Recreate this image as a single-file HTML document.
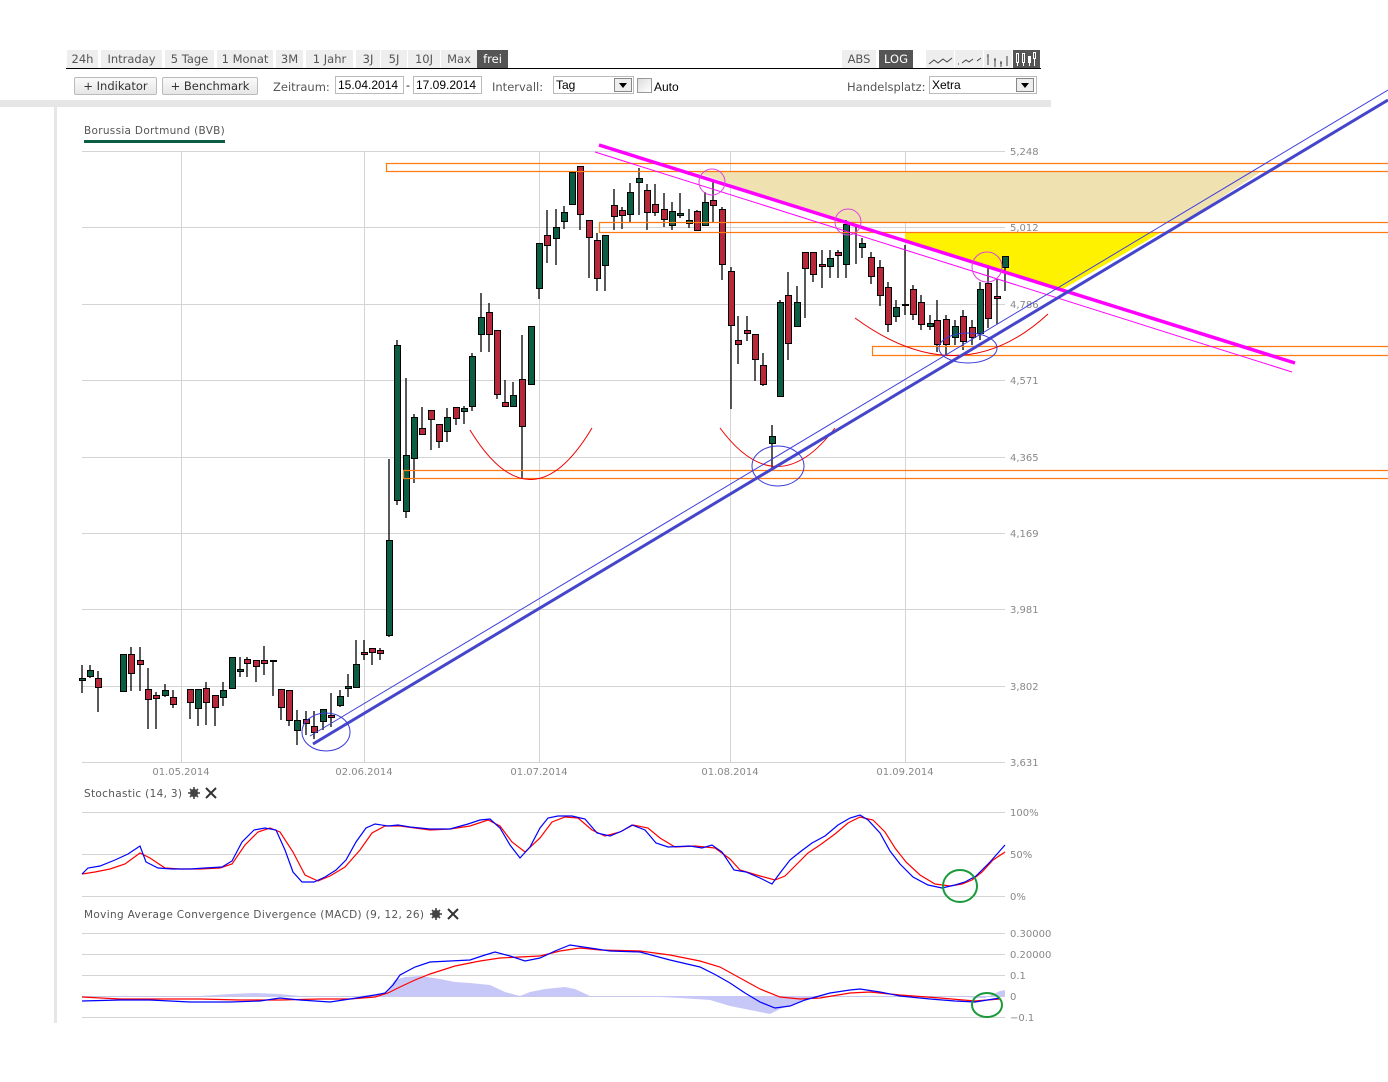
<!DOCTYPE html>
<html><head><meta charset="utf-8">
<style>
*{margin:0;padding:0;box-sizing:border-box}
body{width:1388px;height:1082px;background:#fff;font-family:"DejaVu Sans","Liberation Sans",sans-serif;font-size:11px;color:#444;position:relative;overflow:hidden}
.a{position:absolute;white-space:nowrap}
.tab{position:absolute;top:50px;height:18px;background:#eee;color:#555;font-size:11.5px;line-height:18px;text-align:center}
.btn{position:absolute;top:77px;height:18px;border:1px solid #bbb;border-radius:2px;background:linear-gradient(#fafafa,#e6e6e6);color:#333;font-size:11.5px;line-height:16px;text-align:center}
.inp{position:absolute;top:76px;height:18px;border:1px solid #bbb;background:#fff;font-family:"Liberation Sans",sans-serif;font-size:12px;line-height:16px;padding-left:2px;color:#000}
.arr{position:absolute;width:18px;height:14px;border:1px solid #888;background:#eee}
.arr:after{content:"";position:absolute;left:4px;top:4px;border-left:4px solid transparent;border-right:4px solid transparent;border-top:5px solid #000}
svg{position:absolute;left:0;top:0}
</style></head><body>
<div class="tab" style="left:67px;width:31px">24h</div>
<div class="tab" style="left:101px;width:61px">Intraday</div>
<div class="tab" style="left:165px;width:49px">5 Tage</div>
<div class="tab" style="left:217px;width:56px">1 Monat</div>
<div class="tab" style="left:276px;width:27px">3M</div>
<div class="tab" style="left:306px;width:47px">1 Jahr</div>
<div class="tab" style="left:356px;width:24px">3J</div>
<div class="tab" style="left:381px;width:26px">5J</div>
<div class="tab" style="left:408px;width:32px">10J</div>
<div class="tab" style="left:441px;width:36px">Max</div>
<div class="tab" style="left:477px;width:31px;background:#555;color:#fff">frei</div>
<div class="tab" style="left:842px;width:34px">ABS</div>
<div class="tab" style="left:879px;width:34px;background:#555;color:#fff">LOG</div>
<div class="tab" style="left:926px;width:28px"></div>
<div class="tab" style="left:955px;width:28px"></div>
<div class="tab" style="left:984px;width:28px"></div>
<div class="tab" style="left:1013px;width:27px;background:#555"></div>
<div class="a" style="left:66px;top:68px;width:975px;height:1px;background:#000"></div>

<div class="btn" style="left:74px;width:83px">+ Indikator</div>
<div class="btn" style="left:162px;width:96px">+ Benchmark</div>
<div class="a" style="left:273px;top:80px;font-size:11.5px;color:#555">Zeitraum:</div>
<div class="inp" style="left:335px;width:69px">15.04.2014</div>
<div class="a" style="left:406px;top:79px;color:#000">-</div>
<div class="inp" style="left:413px;width:69px">17.09.2014</div>
<div class="a" style="left:492px;top:80px;font-size:11.5px;color:#555">Intervall:</div>
<div class="inp" style="left:553px;width:81px">Tag</div>
<div class="arr" style="left:614px;top:78px"></div>
<div class="a" style="left:637px;top:78px;width:15px;height:15px;border:1px solid #999;background:linear-gradient(135deg,#ddd,#fff)"></div>
<div class="a" style="left:654px;top:80px;font-family:'Liberation Sans',sans-serif;font-size:12px;color:#000">Auto</div>
<div class="a" style="left:847px;top:80px;font-size:11.5px;color:#555">Handelsplatz:</div>
<div class="inp" style="left:929px;width:108px">Xetra</div>
<div class="arr" style="left:1016px;top:78px"></div>

<div class="a" style="left:0;top:100px;width:1051px;height:7px;background:#e6e6e6"></div>
<div class="a" style="left:54px;top:107px;width:3px;height:916px;background:#e6e6e6"></div>

<div class="a" style="left:84px;top:125px;font-size:10.5px;color:#555;letter-spacing:0.3px">Borussia Dortmund (BVB)</div>
<div class="a" style="left:84px;top:140px;width:141px;height:3px;background:#0b5e43"></div>

<svg width="1388" height="1082" viewBox="0 0 1388 1082">
<g stroke="#d4d4d4" stroke-width="1">
<line x1="82" y1="151.5" x2="1005" y2="151.5"/><line x1="82" y1="227.5" x2="1005" y2="227.5"/><line x1="82" y1="304.5" x2="1005" y2="304.5"/><line x1="82" y1="380.5" x2="1005" y2="380.5"/><line x1="82" y1="457.5" x2="1005" y2="457.5"/><line x1="82" y1="533.5" x2="1005" y2="533.5"/><line x1="82" y1="609.5" x2="1005" y2="609.5"/><line x1="82" y1="686.5" x2="1005" y2="686.5"/><line x1="82" y1="762.5" x2="1005" y2="762.5"/>
<line x1="181.5" y1="151" x2="181.5" y2="762"/><line x1="364.5" y1="151" x2="364.5" y2="762"/><line x1="539.5" y1="151" x2="539.5" y2="762"/><line x1="730.5" y1="151" x2="730.5" y2="762"/><line x1="905.5" y1="151" x2="905.5" y2="762"/>
<line x1="82" y1="812.5" x2="1005" y2="812.5"/><line x1="82" y1="854.5" x2="1005" y2="854.5"/><line x1="82" y1="896.5" x2="1005" y2="896.5"/>
<line x1="82" y1="933.5" x2="1005" y2="933.5"/><line x1="82" y1="954.5" x2="1005" y2="954.5"/><line x1="82" y1="975.5" x2="1005" y2="975.5"/><line x1="82" y1="1017.5" x2="1005" y2="1017.5"/>
</g>
<line x1="82" y1="996.5" x2="1005" y2="996.5" stroke="#c8c8e8"/>
<g font-family="DejaVu Sans,sans-serif" font-size="10" fill="#888">
<text x="1010" y="155">5,248</text><text x="1010" y="231">5,012</text><text x="1010" y="308">4,786</text><text x="1010" y="384">4,571</text><text x="1010" y="461">4,365</text><text x="1010" y="537">4,169</text><text x="1010" y="613">3,981</text><text x="1010" y="690">3,802</text><text x="1010" y="766">3,631</text>
<text x="181" y="775" text-anchor="middle">01.05.2014</text><text x="364" y="775" text-anchor="middle">02.06.2014</text><text x="539" y="775" text-anchor="middle">01.07.2014</text><text x="730" y="775" text-anchor="middle">01.08.2014</text><text x="905" y="775" text-anchor="middle">01.09.2014</text>
<text x="1010" y="816">100%</text><text x="1010" y="858">50%</text><text x="1010" y="900">0%</text>
<text x="1010" y="937">0.30000</text><text x="1010" y="958">0.20000</text><text x="1010" y="979">0.1</text><text x="1010" y="1000">0</text><text x="1010" y="1021">−0.1</text>
</g>
<g font-family="DejaVu Sans,sans-serif" font-size="10.5" fill="#555">
<text x="84" y="797" textLength="98" lengthAdjust="spacing">Stochastic (14, 3)</text>
<text x="84" y="918" textLength="340" lengthAdjust="spacing">Moving Average Convergence Divergence (MACD) (9, 12, 26)</text>
</g>
<g fill="#444"><circle cx="194" cy="793" r="4"/><circle cx="436" cy="914" r="4"/></g>
<g fill="#fff"><circle cx="194" cy="793" r="1.8"/><circle cx="436" cy="914" r="1.8"/></g>
<g stroke="#444" stroke-width="1.6"><path d="M194 787v12M188 793h12M190 789l8 8M198 789l-8 8M436 908v12M430 914h12M432 910l8 8M440 910l-8 8"/></g>
<g stroke="#333" stroke-width="2"><path d="M206 788l10 10M216 788l-10 10M448 909l10 10M458 909l-10 10"/></g>

<g fill="none" stroke="#444" stroke-width="1"><path d="M929 64l5-4 4 3 5-4 4 3 5-4"/><path d="M958 64h1M962 63l4-3 3 2 4-3M977 61l4-3"/><path d="M988 54v11M987 56h1M995 58v9M994 60h2M1001 61v6M1000 63h2M1007 56v10"/></g>
<g fill="none" stroke="#fff" stroke-width="1"><rect x="1016.5" y="53.5" width="2" height="9"/><rect x="1022.5" y="53.5" width="2" height="9"/><rect x="1028.5" y="56.5" width="2" height="6"/><rect x="1033.5" y="52.5" width="2" height="6"/><path d="M1017.5 62v4M1023.5 62v4M1029.5 56v10M1034.5 58v8"/></g>

<polygon points="692,171 1262,171 1184,222 848,222 835,219" fill="#efe1b0"/>
<polygon points="905,233 1160,233 1063,289 905,241" fill="#fff200"/>

<g stroke="#000" stroke-width="1.3">
<path d="M82 665v28M90 665v13M98 671v41M123 654v37M131 647v44M140 647v44M148 668v61M156 692v37M165 684v13M173 690v18M190 689v30M198 689v37M206 682v43M215 695v31M223 682v24M232 657v31M240 657v20M247 657v20M256 660v22M264 646v29M273 660v36M281 689v31M289 690v36M297 710v35M306 711v24M314 711v28M323 709v21M331 693v34M340 690v17M348 674v23M356 640v47M364 640v20M372 648v17M380 648v12M389 459v178M397 340v165M406 378v140M414 414v69M422 407v27M431 410v40M439 424v24M447 408v34M456 407v18M464 406v18M472 353v58M481 293v59M489 303v49M497 330v69M505 380v26M513 382v24M522 335v143M531 326v58M539 243v56M547 210v53M556 209v56M564 206v23M572 172v32M580 166v64M589 220v58M597 233v58M605 235v56M614 189v41M622 207v22M630 183v39M639 168v47M647 184v46M655 184v32M664 193v34M672 202v28M680 193v25M689 209v19M697 210v20M705 192v34M713 180v42M722 207v73M731 267v142M738 316v48M747 316v25M755 334v47M763 353v33M772 425v45M780 300v97M788 272v88M797 286v40M805 252v66M813 252v30M822 250v38M830 250v28M838 250v28M846 220v58M856 225v39M862 238v20M871 252v32M880 260v46M888 282v50M896 300v22M905 245v70M913 285v35M921 295v35M930 315v15M937 300v52M946 315v40M955 320v25M963 310v40M972 320v25M980 282v58M988 265v63M997 279v45M1005 256v35"/>
</g>
<g stroke="#000" stroke-width="1">
<g fill="#0b5e43">
<rect x="79.5" y="678.5" width="6" height="2"/><rect x="87.5" y="670.5" width="6" height="6"/><rect x="120.5" y="654.5" width="6" height="37"/><rect x="162.5" y="690.5" width="6" height="5"/><rect x="195.5" y="689.5" width="6" height="19"/><rect x="220.5" y="690.5" width="6" height="7"/><rect x="229.5" y="657.5" width="6" height="31"/><rect x="237.5" y="669.5" width="6" height="2"/><rect x="270.5" y="660.5" width="6" height="1"/><rect x="294.5" y="720.5" width="6" height="10"/><rect x="320.5" y="709.5" width="6" height="12"/><rect x="337.5" y="696.5" width="6" height="9"/><rect x="345.5" y="686.5" width="6" height="2"/><rect x="353.5" y="664.5" width="6" height="23"/><rect x="386.5" y="540.5" width="6" height="95"/><rect x="394.5" y="345.5" width="6" height="155"/><rect x="403.5" y="455.5" width="6" height="56"/><rect x="411.5" y="417.5" width="6" height="41"/><rect x="444.5" y="417.5" width="6" height="14"/><rect x="461.5" y="408.5" width="6" height="3"/><rect x="469.5" y="356.5" width="6" height="50"/><rect x="478.5" y="317.5" width="6" height="17"/><rect x="510.5" y="395.5" width="6" height="11"/><rect x="528.5" y="326.5" width="6" height="58"/><rect x="536.5" y="243.5" width="6" height="45"/><rect x="553.5" y="227.5" width="6" height="11"/><rect x="561.5" y="212.5" width="6" height="9"/><rect x="569.5" y="172.5" width="6" height="32"/><rect x="602.5" y="235.5" width="6" height="30"/><rect x="627.5" y="192.5" width="6" height="22"/><rect x="636.5" y="178.5" width="6" height="4"/><rect x="669.5" y="211.5" width="6" height="14"/><rect x="677.5" y="213.5" width="6" height="2"/><rect x="686.5" y="220.5" width="6" height="3"/><rect x="702.5" y="202.5" width="6" height="23"/><rect x="769.5" y="436.5" width="6" height="7"/><rect x="777.5" y="302.5" width="6" height="94"/><rect x="794.5" y="302.5" width="6" height="24"/><rect x="827.5" y="258.5" width="6" height="8"/><rect x="843.5" y="224.5" width="6" height="40"/><rect x="859.5" y="243.5" width="6" height="4"/><rect x="893.5" y="307.5" width="6" height="9"/><rect x="902.5" y="304.5" width="6" height="1"/><rect x="927.5" y="323.5" width="6" height="3"/><rect x="952.5" y="326.5" width="6" height="11"/><rect x="977.5" y="289.5" width="6" height="44"/><rect x="1002.5" y="256.5" width="6" height="11"/>
</g>
<g fill="#b8283a">
<rect x="95.5" y="678.5" width="6" height="9"/><rect x="128.5" y="654.5" width="6" height="19"/><rect x="137.5" y="660.5" width="6" height="4"/><rect x="145.5" y="689.5" width="6" height="10"/><rect x="153.5" y="695.5" width="6" height="3"/><rect x="170.5" y="697.5" width="6" height="7"/><rect x="187.5" y="689.5" width="6" height="13"/><rect x="203.5" y="688.5" width="6" height="14"/><rect x="212.5" y="695.5" width="6" height="12"/><rect x="244.5" y="659.5" width="6" height="4"/><rect x="253.5" y="660.5" width="6" height="6"/><rect x="261.5" y="660.5" width="6" height="3"/><rect x="278.5" y="689.5" width="6" height="18"/><rect x="286.5" y="690.5" width="6" height="30"/><rect x="303.5" y="719.5" width="6" height="4"/><rect x="311.5" y="726.5" width="6" height="6"/><rect x="328.5" y="715.5" width="6" height="2"/><rect x="361.5" y="652.5" width="6" height="2"/><rect x="369.5" y="648.5" width="6" height="4"/><rect x="377.5" y="650.5" width="6" height="3"/><rect x="419.5" y="428.5" width="6" height="6"/><rect x="428.5" y="410.5" width="6" height="9"/><rect x="436.5" y="424.5" width="6" height="17"/><rect x="453.5" y="407.5" width="6" height="11"/><rect x="486.5" y="312.5" width="6" height="22"/><rect x="494.5" y="330.5" width="6" height="64"/><rect x="502.5" y="402.5" width="6" height="4"/><rect x="519.5" y="379.5" width="6" height="47"/><rect x="544.5" y="235.5" width="6" height="10"/><rect x="577.5" y="166.5" width="6" height="48"/><rect x="586.5" y="220.5" width="6" height="17"/><rect x="594.5" y="240.5" width="6" height="38"/><rect x="611.5" y="205.5" width="6" height="11"/><rect x="619.5" y="210.5" width="6" height="5"/><rect x="644.5" y="190.5" width="6" height="22"/><rect x="652.5" y="204.5" width="6" height="8"/><rect x="661.5" y="209.5" width="6" height="10"/><rect x="694.5" y="211.5" width="6" height="19"/><rect x="710.5" y="200.5" width="6" height="5"/><rect x="719.5" y="209.5" width="6" height="55"/><rect x="728.5" y="271.5" width="6" height="54"/><rect x="735.5" y="340.5" width="6" height="4"/><rect x="744.5" y="330.5" width="6" height="3"/><rect x="752.5" y="334.5" width="6" height="25"/><rect x="760.5" y="365.5" width="6" height="19"/><rect x="785.5" y="295.5" width="6" height="48"/><rect x="802.5" y="252.5" width="6" height="16"/><rect x="810.5" y="252.5" width="6" height="22"/><rect x="819.5" y="264.5" width="6" height="2"/><rect x="835.5" y="252.5" width="6" height="3"/><rect x="868.5" y="257.5" width="6" height="19"/><rect x="877.5" y="267.5" width="6" height="28"/><rect x="885.5" y="287.5" width="6" height="37"/><rect x="910.5" y="289.5" width="6" height="25"/><rect x="918.5" y="302.5" width="6" height="22"/><rect x="934.5" y="320.5" width="6" height="24"/><rect x="943.5" y="319.5" width="6" height="25"/><rect x="960.5" y="316.5" width="6" height="25"/><rect x="969.5" y="327.5" width="6" height="10"/><rect x="985.5" y="283.5" width="6" height="35"/><rect x="994.5" y="296.5" width="6" height="2"/>
</g>
</g>

<g fill="none" stroke="#ff7a10" stroke-width="1.2">
<path d="M1388 163.5H386.5v8H1388"/>
<path d="M1388 222.5H599.5v10H1388"/>
<path d="M1388 470.5H403.5v8H1388"/>
<path d="M1388 346.5H872.5v9H1388"/>
</g>
<g fill="none" stroke="#e00" stroke-width="1">
<path d="M470 430 Q531 530 592 428"/>
<path d="M720 428 Q777 505 835 428"/>
<path d="M855 318 Q960 395 1048 314"/>
</g>
<line x1="599" y1="145" x2="1295" y2="363" stroke="#f0f" stroke-width="3.5"/>
<line x1="595" y1="152" x2="1292" y2="372" stroke="#f0f" stroke-width="1"/>
<g fill="none" stroke="#e040e0" stroke-width="1"><circle cx="712" cy="182" r="13"/><circle cx="848" cy="222" r="13"/><circle cx="987" cy="267" r="15"/></g>
<line x1="313" y1="744" x2="1388" y2="100" stroke="#4545cc" stroke-width="3"/>
<line x1="310" y1="736" x2="1388" y2="90" stroke="#4040dd" stroke-width="1"/>
<g fill="none" stroke="#3a3ad8" stroke-width="1"><ellipse cx="326" cy="732" rx="24" ry="19"/><ellipse cx="778" cy="466" rx="26" ry="20"/><ellipse cx="968" cy="348" rx="29" ry="15"/></g>

<polyline fill="none" stroke="#ff0000" stroke-width="1.2" points="82,874 95,872 110,869 125,864 140,853 150,858 165,868 180,869 200,869 220,868 232,864 245,845 258,832 270,828 280,832 293,852 305,875 318,881 330,876 345,867 360,850 372,833 385,826 400,826 415,828 430,830 450,829 470,826 488,820 500,826 512,842 525,852 540,838 552,822 565,817 578,818 592,830 605,836 620,832 633,825 648,828 660,838 675,847 695,846 715,848 730,859 740,870 760,876 775,880 785,876 795,866 808,853 820,845 835,834 848,823 860,817 873,820 885,832 895,848 906,862 920,875 935,884 950,886 962,884 972,880 982,872 993,860 1005,852"/>
<polyline fill="none" stroke="#0000ff" stroke-width="1.2" points="82,874 88,868 100,866 115,860 128,854 140,846 146,862 158,868 172,869 190,869 205,868 222,867 232,861 242,842 254,830 265,828 276,830 285,850 293,872 302,882 314,882 325,877 336,870 346,860 356,842 366,828 375,824 388,826 398,825 410,827 430,829 450,829 468,824 480,820 490,819 500,828 510,845 520,858 530,847 540,828 548,818 558,816 572,816 585,819 597,833 610,836 622,831 632,825 645,830 656,843 668,847 690,846 702,848 712,845 722,852 734,870 746,872 760,878 772,884 780,873 790,860 800,852 812,843 825,836 838,825 850,818 860,815 868,820 880,833 890,851 900,864 913,877 928,885 942,888 955,885 965,882 976,876 990,862 1005,845"/>
<ellipse cx="960" cy="886" rx="17" ry="16" fill="none" stroke="#1a9a3a" stroke-width="2"/>

<path fill="#c8c8f8" d="M82 996 L200 996 L230 994 L255 993 L280 994 L300 996 L360 996 L385 993 L395 980 L405 977 L420 976 L440 979 L455 982 L470 983 L490 985 L505 992 L520 996 L530 992 L545 989 L565 987 L575 989 L590 996 L640 996 L680 998 L710 1000 L730 1006 L750 1010 L770 1014 L780 1009 L800 1002 L815 996 L880 996 L900 996 L960 996 L975 998 L985 998 L1000 991 L1005 990 L1005 996 Z"/>
<polyline fill="none" stroke="#ff0000" stroke-width="1.2" points="82,997 120,999 160,999 200,999 240,1000 280,1000 320,999 350,999 375,997 388,993 400,987 415,980 430,974 455,966 480,961 500,958 520,957 540,956 560,951 580,948 600,950 640,951 670,955 700,961 720,967 740,978 760,989 780,997 800,999 820,998 850,993 870,992 900,995 940,998 975,1001 1000,999"/>
<polyline fill="none" stroke="#0000ff" stroke-width="1.2" points="82,1001 120,1000 150,1000 190,1002 230,1002 260,1001 280,998 300,1000 330,1002 350,999 375,995 385,993 393,985 400,975 415,967 430,962 450,961 470,960 485,955 495,952 510,956 525,961 540,958 555,951 570,945 590,948 610,951 640,952 670,960 700,967 716,975 730,983 745,993 760,1002 775,1008 790,1006 805,1000 830,993 850,990 860,989 880,992 900,996 930,999 955,1001 975,1002 1000,998"/>
<ellipse cx="987" cy="1005" rx="15" ry="12" fill="none" stroke="#1a9a3a" stroke-width="2"/>
</svg>
</body></html>
